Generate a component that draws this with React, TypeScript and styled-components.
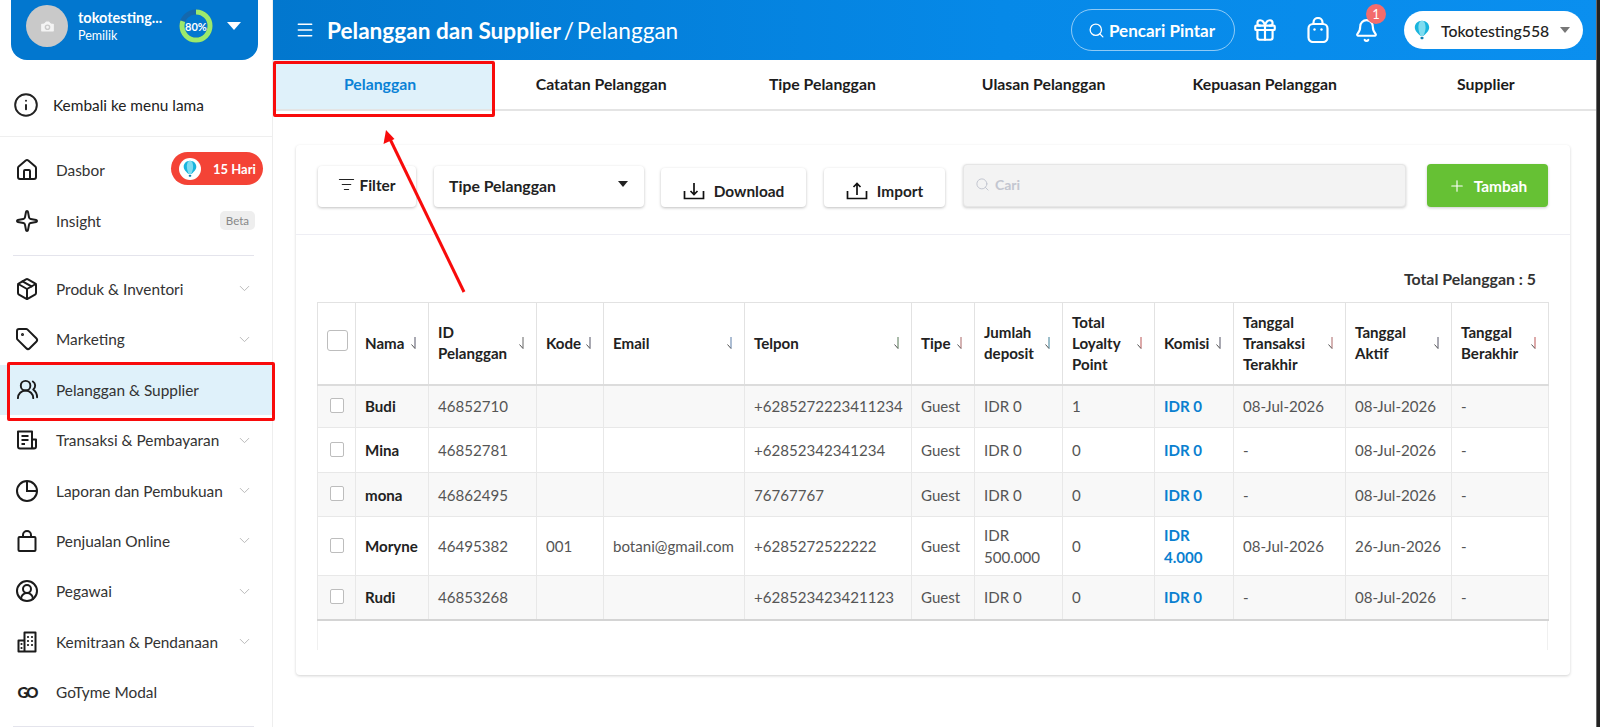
import React from 'react';
import styled, {createGlobalStyle} from 'styled-components';
import {
  Bell, Camera, ChevronDown, CircleUserRound, Gift, House, Info, ListFilter, Menu,
  Package, Plus, Search, Sparkle, Tag, UsersRound,
} from 'lucide-react';

const FONT = `"Lato", "Noto Sans", sans-serif`;

const GlobalStyle = createGlobalStyle`
  html, body {
    margin: 0;
    padding: 0;
    height: 727px;
    overflow: hidden;
    background: #fff;
    font-family: ${FONT};
    color: #222;
  }
  * { box-sizing: border-box; }
`;

const Page = styled.div`
  position: relative;
  display: flex;
  width: 1600px;
  height: 727px;
  overflow: hidden;
`;

/* ---------- sidebar ---------- */

const Sidebar = styled.aside`
  flex: 0 0 273px;
  height: 727px;
  border-right: 1px solid #eeeeee;
  background: #fff;
`;

const ProfileCard = styled.div`
  display: flex;
  align-items: center;
  width: 247px;
  height: 60px;
  margin-left: 11px;
  padding: 0 0 8px 15px;
  background: #0277cf;
  border-radius: 0 0 16px 16px;
  color: #fff;
`;

const Avatar = styled.div`
  display: flex;
  flex: 0 0 42px;
  align-items: center;
  justify-content: center;
  height: 42px;
  border-radius: 50%;
  background: #c9c9c9;
  color: #f4f4f4;
`;

const ProfileText = styled.div`
  flex: 0 0 100px;
  margin-left: 10px;
  overflow: hidden;
`;

const ProfileName = styled.div`
  font-size: 14.5px;
  font-weight: 700;
  line-height: 18px;
  white-space: nowrap;
`;

const ProfileRole = styled.div`
  font-size: 12.5px;
  line-height: 17px;
`;

const Ring = styled.div`
  position: relative;
  display: flex;
  flex: 0 0 34px;
  align-items: center;
  justify-content: center;
  height: 34px;
  margin-left: 1px;
  font-size: 11px;
  font-weight: 700;
`;

const RingSvg = styled.svg`
  position: absolute;
  inset: 0;
`;

const RingLabel = styled.span`
  position: relative;
`;

const WhiteCaret = styled.span`
  width: 0;
  height: 0;
  margin-left: 14px;
  border-left: 7px solid transparent;
  border-right: 7px solid transparent;
  border-top: 8px solid #fff;
`;

const BackRow = styled.div`
  display: flex;
  align-items: center;
  height: 77px;
  padding: 13px 0 0 13px;
  border-bottom: 1px solid #efefef;
  font-size: 15.4px;
  color: #222;
  span { margin-left: 14px; }
`;

const NavGroup = styled.div<{$top: number; $bottom: number}>`
  padding: ${p => p.$top}px 0 ${p => p.$bottom}px;
`;

const LineRule = styled.div`
  height: 1px;
  margin: 0 18px 0 13px;
  background: #e4e4ec;
`;

const NavRow = styled.div<{$active?: boolean}>`
  display: flex;
  align-items: center;
  height: 50.4px;
  padding: 0 16px 0 14px;
  background: ${p => (p.$active ? '#dff1fa' : 'transparent')};
  color: #333;
  font-size: 15.4px;
`;

const NavIcon = styled.span`
  display: flex;
  flex: 0 0 26px;
  justify-content: center;
  color: #1b1b1b;
`;

const NavLabel = styled.span`
  flex: 1;
  margin-left: 16px;
  white-space: nowrap;
`;

const NavChevron = styled(ChevronDown)`
  color: #b5b5b5;
  margin-right: 3px;
`;

const GoMark = styled.span`
  font-size: 15px;
  font-weight: 900;
  letter-spacing: -2px;
  color: #222;
`;

const TrialBadge = styled.div`
  display: flex;
  align-items: center;
  flex: none;
  width: 92px;
  height: 33px;
  margin: 0 -7px 3px 0;
  padding-left: 8px;
  border-radius: 17px;
  background: #f44336;
  color: #fff;
  font-size: 13px;
  font-weight: 700;
`;

const TrialIcon = styled.span`
  display: flex;
  align-items: center;
  justify-content: center;
  width: 22px;
  height: 22px;
  margin-right: 12px;
  border-radius: 50%;
  background: #fff;
`;

const BetaTag = styled.span`
  padding: 3px 6px;
  margin-right: 1px;
  border-radius: 5px;
  background: #eeeeee;
  color: #888;
  font-size: 11.5px;
`;

/* ---------- top bar ---------- */

const Main = styled.main`
  flex: 1;
  min-width: 0;
`;

const TopBar = styled.header`
  display: flex;
  align-items: center;
  height: 60px;
  padding: 0 17px 0 22px;
  background: linear-gradient(90deg, #0277ce 0%, #0689e8 55%, #0a8fef 100%);
  color: #fff;
`;

const Title = styled.h1`
  flex: 1;
  margin: 0 0 0 12px;
  font-size: 22.6px;
  font-weight: 700;
  white-space: nowrap;
`;

const TitleCurrent = styled.span`
  margin-left: 3px;
  font-weight: 400;
  word-spacing: -3px;
`;

const SmartSearch = styled.button`
  display: flex;
  align-items: center;
  gap: 4px;
  width: 164px;
  height: 42px;
  padding: 0 0 0 16px;
  border: 1px solid rgba(255, 255, 255, 0.55);
  border-radius: 21px;
  background: transparent;
  color: #fff;
  font-family: ${FONT};
  font-size: 17px;
  font-weight: 700;
  white-space: nowrap;
`;

const TopIcon = styled.span<{$gap: number}>`
  position: relative;
  display: flex;
  justify-content: center;
  width: 26px;
  margin-left: ${p => p.$gap}px;
`;

const CountDot = styled.span`
  position: absolute;
  top: -14px;
  right: -7px;
  display: flex;
  align-items: center;
  justify-content: center;
  width: 20px;
  height: 20px;
  border-radius: 50%;
  background: #f36c6c;
  font-size: 13px;
`;

const StorePill = styled.div`
  display: flex;
  align-items: center;
  width: 179px;
  height: 38px;
  margin-left: 25px;
  padding-left: 10px;
  border-radius: 19px;
  background: #fff;
  color: #222;
  font-size: 15.8px;
  font-weight: 500;
`;

const StoreName = styled.span`
  flex: 1;
  margin-left: 11px;
`;

const GreyCaret = styled.span`
  width: 0;
  height: 0;
  margin-right: 13px;
  border-left: 5px solid transparent;
  border-right: 5px solid transparent;
  border-top: 6px solid #777;
`;

/* ---------- tabs ---------- */

const Tabs = styled.nav`
  display: grid;
  grid-template-columns: repeat(6, 1fr);
  height: 51px;
  border-bottom: 2px solid #e4e4e4;
`;

const TabItem = styled.div<{$active?: boolean}>`
  display: flex;
  align-items: center;
  justify-content: center;
  padding: 0 7px 2px 0;
  background: ${p => (p.$active ? '#dff1fa' : '#fff')};
  color: ${p => (p.$active ? '#0a82d6' : '#1c1c1c')};
  font-size: 15.8px;
  font-weight: 700;
`;

/* ---------- card ---------- */

const Content = styled.div`
  padding: 34px 30px 0 23px;
`;

const Card = styled.section`
  height: 530px;
  border-radius: 4px;
  background: #fff;
  box-shadow: 0 1px 3px rgba(0, 0, 0, 0.18);
`;

const Toolbar = styled.div`
  display: flex;
  align-items: flex-end;
  height: 90px;
  padding: 0 22px 27px 22px;
  border-bottom: 1px solid #eeeef4;
`;

const ToolButton = styled.button<{$w: number; $h: number; $gap: number}>`
  display: flex;
  align-items: center;
  justify-content: center;
  gap: 9px;
  width: ${p => p.$w}px;
  height: ${p => p.$h}px;
  margin-left: ${p => p.$gap}px;
  padding: 6px 0 0;
  border: 0;
  border-radius: 4px;
  background: #fff;
  box-shadow: 0 1px 3px rgba(0, 0, 0, 0.25);
  color: #222;
  font-family: ${FONT};
  font-size: 15.4px;
  font-weight: 700;
`;

const FilterButton = styled(ToolButton)`
  gap: 4px;
  padding: 0 0 4px;
`;

const SelectButton = styled(ToolButton)`
  justify-content: space-between;
  padding: 0 16px 2px 15px;
  font-size: 15.8px;
`;

const DarkCaret = styled.span`
  width: 0;
  height: 0;
  margin-bottom: 4px;
  border-left: 5px solid transparent;
  border-right: 5px solid transparent;
  border-top: 6px solid #222;
`;

const SearchBox = styled.div`
  display: flex;
  flex: 0 0 443px;
  align-items: center;
  gap: 5px;
  height: 43px;
  margin-left: 18px;
  padding: 0 0 3px 11px;
  border: 1px solid #e6e6e6;
  border-radius: 4px;
  background: #f3f3f3;
  box-shadow: 0 1px 3px rgba(0, 0, 0, 0.2);
  color: #c3c6d0;
  font-size: 14px;
  font-weight: 700;
`;

const AddButton = styled.button`
  display: flex;
  align-items: center;
  justify-content: center;
  gap: 8px;
  width: 121px;
  height: 43px;
  margin-left: 21px;
  border: 0;
  border-radius: 4px;
  background: #66c134;
  box-shadow: 0 1px 3px rgba(0, 0, 0, 0.2);
  color: #fff;
  font-family: ${FONT};
  font-size: 15.4px;
  font-weight: 700;
`;

const CardBody = styled.div`
  padding: 35px 22px 0 21px;
`;

const TotalLine = styled.div`
  height: 32px;
  padding-right: 12px;
  line-height: 18px;
  text-align: right;
  font-size: 15.9px;
  font-weight: 700;
  color: #333;
`;

/* ---------- table ---------- */

const TableFrame = styled.div`
  height: 348px;
  border-left: 1px solid #f0f0f0;
  border-right: 1px solid #f0f0f0;
`;

const Table = styled.table`
  width: 1231px;
  margin-left: -1px;
  border-collapse: collapse;
  table-layout: fixed;
  font-size: 15.1px;
  color: #555;
`;

const HeadCell = styled.th`
  height: 82px;
  padding: 0 12px 0 9px;
  border: 1px solid #e2e2e2;
  border-bottom: 2px solid #dcdcdc;
  background: #fff;
  color: #222;
  font-weight: 700;
  line-height: 21px;
  text-align: left;
`;

const HeadInner = styled.div`
  display: flex;
  align-items: center;
  justify-content: space-between;
`;

const BodyRow = styled.tr<{$h: number; $stripe: boolean}>`
  height: ${p => p.$h}px;
  background: ${p => (p.$stripe ? '#f8f8f8' : '#fff')};
`;

const BodyCell = styled.td`
  padding: 0 9px;
  border: 1px solid #e8e8e8;
  line-height: 22px;
  white-space: pre-line;
`;

const NameCell = styled(BodyCell)`
  color: #222;
  font-weight: 700;
`;

const MoneyCell = styled(BodyCell)`
  color: #0a7fd0;
  font-weight: 700;
`;

const LastRow = styled.tbody`
  tr:last-child td { border-bottom: 2px solid #d4d4d4; }
`;

const CheckCell = styled(BodyCell)`
  padding: 0;
  text-align: center;
`;

const Check = styled.span<{$big?: boolean}>`
  display: inline-block;
  width: ${p => (p.$big ? 21 : 14)}px;
  height: ${p => (p.$big ? 21 : 15)}px;
  margin-bottom: ${p => (p.$big ? 6 : 5)}px;
  border: 1px solid #bdbdbd;
  border-radius: ${p => (p.$big ? 3 : 2)}px;
  background: #fff;
  vertical-align: middle;
`;

/* ---------- annotations lying over the page ---------- */

const Highlight = styled.div<{$x: number; $y: number; $w: number; $h: number}>`
  position: absolute;
  left: ${p => p.$x}px;
  top: ${p => p.$y}px;
  width: ${p => p.$w}px;
  height: ${p => p.$h}px;
  border: 3px solid #f80b0b;
  border-radius: 2px;
  pointer-events: none;
`;

const ArrowLayer = styled.svg`
  position: absolute;
  left: 0;
  top: 0;
  pointer-events: none;
`;

const EdgeStrip = styled.div`
  position: absolute;
  top: 0;
  right: 0;
  width: 4px;
  height: 727px;
  border-left: 1px solid #6b6b6b;
  background: #222;
`;

/* ---------- small drawings ---------- */

const Balloon = ({size}: {size: number}) => (
  <svg width={size} height={size * 1.25} viewBox="0 0 20 25">
    <path d="M10 1C4.500 1 1 5 1 9.500c0 4.500 4.500 8 7 10.500h4c2.500-2.500 7-6 7-10.500C19 5 15.500 1 10 1z" fill="#19b4dd" />
    <path d="M10 1C7 1 5.500 5 5.500 9.500c0 4.500 2 8 2.500 10.500h4c.5-2.500 2.500-6 2.500-10.500C14.500 5 13 1 10 1z" fill="#7fdcf0" />
    <rect x="8.200" y="21" width="3.600" height="3" rx="1" fill="#0f7fb0" />
  </svg>
);

const SortMark = ({tint}: {tint: string}) => (
  <svg width="6" height="14" viewBox="0 0 6 14" style={{flex: 'none'}} fill="none">
    <path d="M5 1v11.500" stroke={tint} strokeWidth="1" />
    <path d="M5 12.500L1.500 8.500" stroke="#555" strokeWidth="1" />
  </svg>
);

const ReportIcon = () => (
  <svg width="24" height="24" viewBox="0 0 24 24" fill="none" stroke="currentColor" strokeWidth="2">
    <circle cx="12" cy="12" r="10" />
    <path d="M12 2v10h10" />
  </svg>
);

const ShopBagIcon = () => (
  <svg width="24" height="24" viewBox="0 0 24 24" fill="none" stroke="currentColor" strokeWidth="2">
    <rect x="3.500" y="8" width="17" height="14" rx="1" />
    <path d="M8 8V6a4 4 0 0 1 8 0v2" />
  </svg>
);

const ReceiptIcon = () => (
  <svg width="24" height="24" viewBox="0 0 24 24" fill="none" stroke="currentColor" strokeWidth="2" strokeLinejoin="round">
    <path d="M17 20.500H5a2 2 0 0 1-2-2V3.500h14v17zM17 11.500h4v7a2 2 0 0 1-4 0" />
    <path d="M6.500 8h7M6.500 12h7M6.500 16h3.500" />
  </svg>
);

const BuildingIcon = () => (
  <svg width="24" height="24" viewBox="0 0 24 24" fill="none" stroke="currentColor" strokeWidth="2" strokeLinejoin="round">
    <path d="M9.500 21.500V2.500h11v19zM3.500 21.500v-11h6v11z" />
    <path d="M13 7h.01M17 7h.01M13 11h.01M17 11h.01M13 15h.01M17 15h.01M6.500 14h.01M6.500 18h.01" strokeLinecap="round" strokeWidth="2.200" />
  </svg>
);

const StoreBagIcon = () => (
  <svg width="24" height="26" viewBox="0 0 24 26" fill="none" stroke="#fff" strokeWidth="2.200">
    <rect x="2.500" y="7" width="19" height="18" rx="4.500" />
    <path d="M7.500 7V5.500a4.500 4.500 0 0 1 9 0V7" />
    <circle cx="8.500" cy="12.500" r="1.200" fill="#fff" stroke="none" />
    <circle cx="15.500" cy="12.500" r="1.200" fill="#fff" stroke="none" />
  </svg>
);

const TrayIcon = ({up}: {up?: boolean}) => (
  <svg width="22" height="18" viewBox="0 0 22 18" fill="none" stroke="#111" strokeWidth="1.700">
    <path d="M1.500 9v7.500h19V9" />
    {up
      ? <path d="M11 13V1.500M7.500 5L11 1.500 14.500 5" />
      : <path d="M11 1v11.500M7.500 9l3.500 3.500L14.500 9" />}
  </svg>
);

/* ---------- data ---------- */

const navItems: {label: string; icon: React.ReactNode; chevron?: boolean; active?: boolean}[] = [
  {label: 'Produk & Inventori', icon: <Package size={24} strokeWidth={2} />, chevron: true},
  {label: 'Marketing', icon: <Tag size={24} strokeWidth={2} />, chevron: true},
  {label: 'Pelanggan & Supplier', icon: <UsersRound size={23} strokeWidth={2} />, active: true},
  {label: 'Transaksi & Pembayaran', icon: <ReceiptIcon />, chevron: true},
  {label: 'Laporan dan Pembukuan', icon: <ReportIcon />, chevron: true},
  {label: 'Penjualan Online', icon: <ShopBagIcon />, chevron: true},
  {label: 'Pegawai', icon: <CircleUserRound size={24} strokeWidth={2} />, chevron: true},
  {label: 'Kemitraan & Pendanaan', icon: <BuildingIcon />, chevron: true},
  {label: 'GoTyme Modal', icon: <GoMark>GO</GoMark>},
];

const tabs = ['Pelanggan', 'Catatan Pelanggan', 'Tipe Pelanggan', 'Ulasan Pelanggan', 'Kepuasan Pelanggan', 'Supplier'];

const columns: {label: string; width: number; tint: string}[] = [
  {label: 'Nama', width: 73, tint: '#556'},
  {label: 'ID Pelanggan', width: 108, tint: '#666'},
  {label: 'Kode', width: 67, tint: '#556'},
  {label: 'Email', width: 141, tint: '#5a7ca8'},
  {label: 'Telpon', width: 167, tint: '#557755'},
  {label: 'Tipe', width: 63, tint: '#a66'},
  {label: 'Jumlah deposit', width: 88, tint: '#3a7f96'},
  {label: 'Total Loyalty Point', width: 92, tint: '#b55'},
  {label: 'Komisi', width: 79, tint: '#556'},
  {label: 'Tanggal Transaksi Terakhir', width: 112, tint: '#a66'},
  {label: 'Tanggal Aktif', width: 106, tint: '#556'},
  {label: 'Tanggal Berakhir', width: 97, tint: '#b55'},
];

const rows = [
  {h: 43, c: ['Budi', '46852710', '', '', '+6285272223411234', 'Guest', 'IDR 0', '1', 'IDR 0', '08-Jul-2026', '08-Jul-2026', '-']},
  {h: 45, c: ['Mina', '46852781', '', '', '+62852342341234', 'Guest', 'IDR 0', '0', 'IDR 0', '-', '08-Jul-2026', '-']},
  {h: 44, c: ['mona', '46862495', '', '', '76767767', 'Guest', 'IDR 0', '0', 'IDR 0', '-', '08-Jul-2026', '-']},
  {h: 59, c: ['Moryne', '46495382', '001', 'botani@gmail.com', '+6285272522222', 'Guest', 'IDR 500.000', '0', 'IDR 4.000', '08-Jul-2026', '26-Jun-2026', '-']},
  {h: 44, c: ['Rudi', '46853268', '', '', '+628523423421123', 'Guest', 'IDR 0', '0', 'IDR 0', '-', '08-Jul-2026', '-']},
];

const App: React.FC = () => {
  return (
    <Page>
      <GlobalStyle />

      <Sidebar>
        <ProfileCard>
          <Avatar><Camera size={17} fill="#f4f4f4" stroke="#c9c9c9" /></Avatar>
          <ProfileText>
            <ProfileName>tokotesting...</ProfileName>
            <ProfileRole>Pemilik</ProfileRole>
          </ProfileText>
          <Ring>
            <RingSvg width="34" height="34" viewBox="0 0 34 34" fill="none">
              <circle cx="17" cy="17" r="14" stroke="#1568ad" strokeWidth="5" />
              <circle cx="17" cy="17" r="14" stroke="#9cea6c" strokeWidth="5" strokeDasharray="70.400 88" transform="rotate(-90 17 17)" />
            </RingSvg>
            <RingLabel>80%</RingLabel>
          </Ring>
          <WhiteCaret />
        </ProfileCard>

        <BackRow>
          <Info size={26} strokeWidth={1.8} />
          <span>Kembali ke menu lama</span>
        </BackRow>

        <NavGroup $top={8} $bottom={9}>
          <NavRow>
            <NavIcon><House size={24} strokeWidth={2} /></NavIcon>
            <NavLabel>Dasbor</NavLabel>
            <TrialBadge>
              <TrialIcon><Balloon size={14} /></TrialIcon>
              15 Hari
            </TrialBadge>
          </NavRow>
          <NavRow>
            <NavIcon><Sparkle size={24} strokeWidth={2} /></NavIcon>
            <NavLabel>Insight</NavLabel>
            <BetaTag>Beta</BetaTag>
          </NavRow>
        </NavGroup>
        <LineRule />

        <NavGroup $top={8} $bottom={9}>
          {navItems.map(item => (
            <NavRow key={item.label} $active={item.active}>
              <NavIcon>{item.icon}</NavIcon>
              <NavLabel>{item.label}</NavLabel>
              {item.chevron && <NavChevron size={17} strokeWidth={1.3} />}
            </NavRow>
          ))}
        </NavGroup>
        <LineRule />
      </Sidebar>

      <Main>
        <TopBar>
          <Menu size={20} strokeWidth={1.8} />
          <Title>Pelanggan dan Supplier<TitleCurrent>/ Pelanggan</TitleCurrent></Title>
          <SmartSearch><Search size={17} strokeWidth={1.8} />Pencari Pintar</SmartSearch>
          <TopIcon $gap={17}><Gift size={26} strokeWidth={2} /></TopIcon>
          <TopIcon $gap={27}><StoreBagIcon /></TopIcon>
          <TopIcon $gap={22}><Bell size={25} strokeWidth={2} /><CountDot>1</CountDot></TopIcon>
          <StorePill>
            <Balloon size={16} />
            <StoreName>Tokotesting558</StoreName>
            <GreyCaret />
          </StorePill>
        </TopBar>

        <Tabs>
          {tabs.map((t, i) => <TabItem key={t} $active={i === 0}>{t}</TabItem>)}
        </Tabs>

        <Content>
          <Card>
            <Toolbar>
              <FilterButton $w={98} $h={41} $gap={0}>
                <ListFilter size={17} strokeWidth={1.6} />Filter
              </FilterButton>
              <SelectButton $w={210} $h={41} $gap={18}>
                Tipe Pelanggan<DarkCaret />
              </SelectButton>
              <ToolButton $w={145} $h={39} $gap={17}><TrayIcon />Download</ToolButton>
              <ToolButton $w={121} $h={39} $gap={18}><TrayIcon up />Import</ToolButton>
              <SearchBox><Search size={15} strokeWidth={1.6} />Cari</SearchBox>
              <AddButton><Plus size={18} strokeWidth={1.5} />Tambah</AddButton>
            </Toolbar>

            <CardBody>
              <TotalLine>Total Pelanggan : 5</TotalLine>
              <TableFrame>
                <Table>
                  <colgroup>
                    <col width={38} />
                    {columns.map(c => <col key={c.label} width={c.width} />)}
                  </colgroup>
                  <thead>
                    <tr>
                      <HeadCell><Check $big /></HeadCell>
                      {columns.map(c => (
                        <HeadCell key={c.label}>
                          <HeadInner>
                            <span>{c.label}</span>
                            <SortMark tint={c.tint} />
                          </HeadInner>
                        </HeadCell>
                      ))}
                    </tr>
                  </thead>
                  <LastRow>
                    {rows.map((r, i) => (
                      <BodyRow key={r.c[0]} $h={r.h} $stripe={i % 2 === 0}>
                        <CheckCell><Check /></CheckCell>
                        {r.c.map((v, j) => {
                          if (j === 0) return <NameCell key={j}>{v}</NameCell>;
                          if (j === 8) return <MoneyCell key={j}>{v}</MoneyCell>;
                          return <BodyCell key={j}>{v}</BodyCell>;
                        })}
                      </BodyRow>
                    ))}
                  </LastRow>
                </Table>
              </TableFrame>
            </CardBody>
          </Card>
        </Content>
      </Main>

      <Highlight $x={273} $y={61} $w={222} $h={56} />
      <Highlight $x={7} $y={362} $w={268} $h={59} />
      <ArrowLayer width="1600" height="727" viewBox="0 0 1600 727">
        <path d="M464 292L390 139" stroke="#f80b0b" strokeWidth="3" fill="none" />
        <path d="M386 130l-2.500 14 11-5z" fill="#f80b0b" />
      </ArrowLayer>
      <EdgeStrip />
    </Page>
  );
};

export default App;
